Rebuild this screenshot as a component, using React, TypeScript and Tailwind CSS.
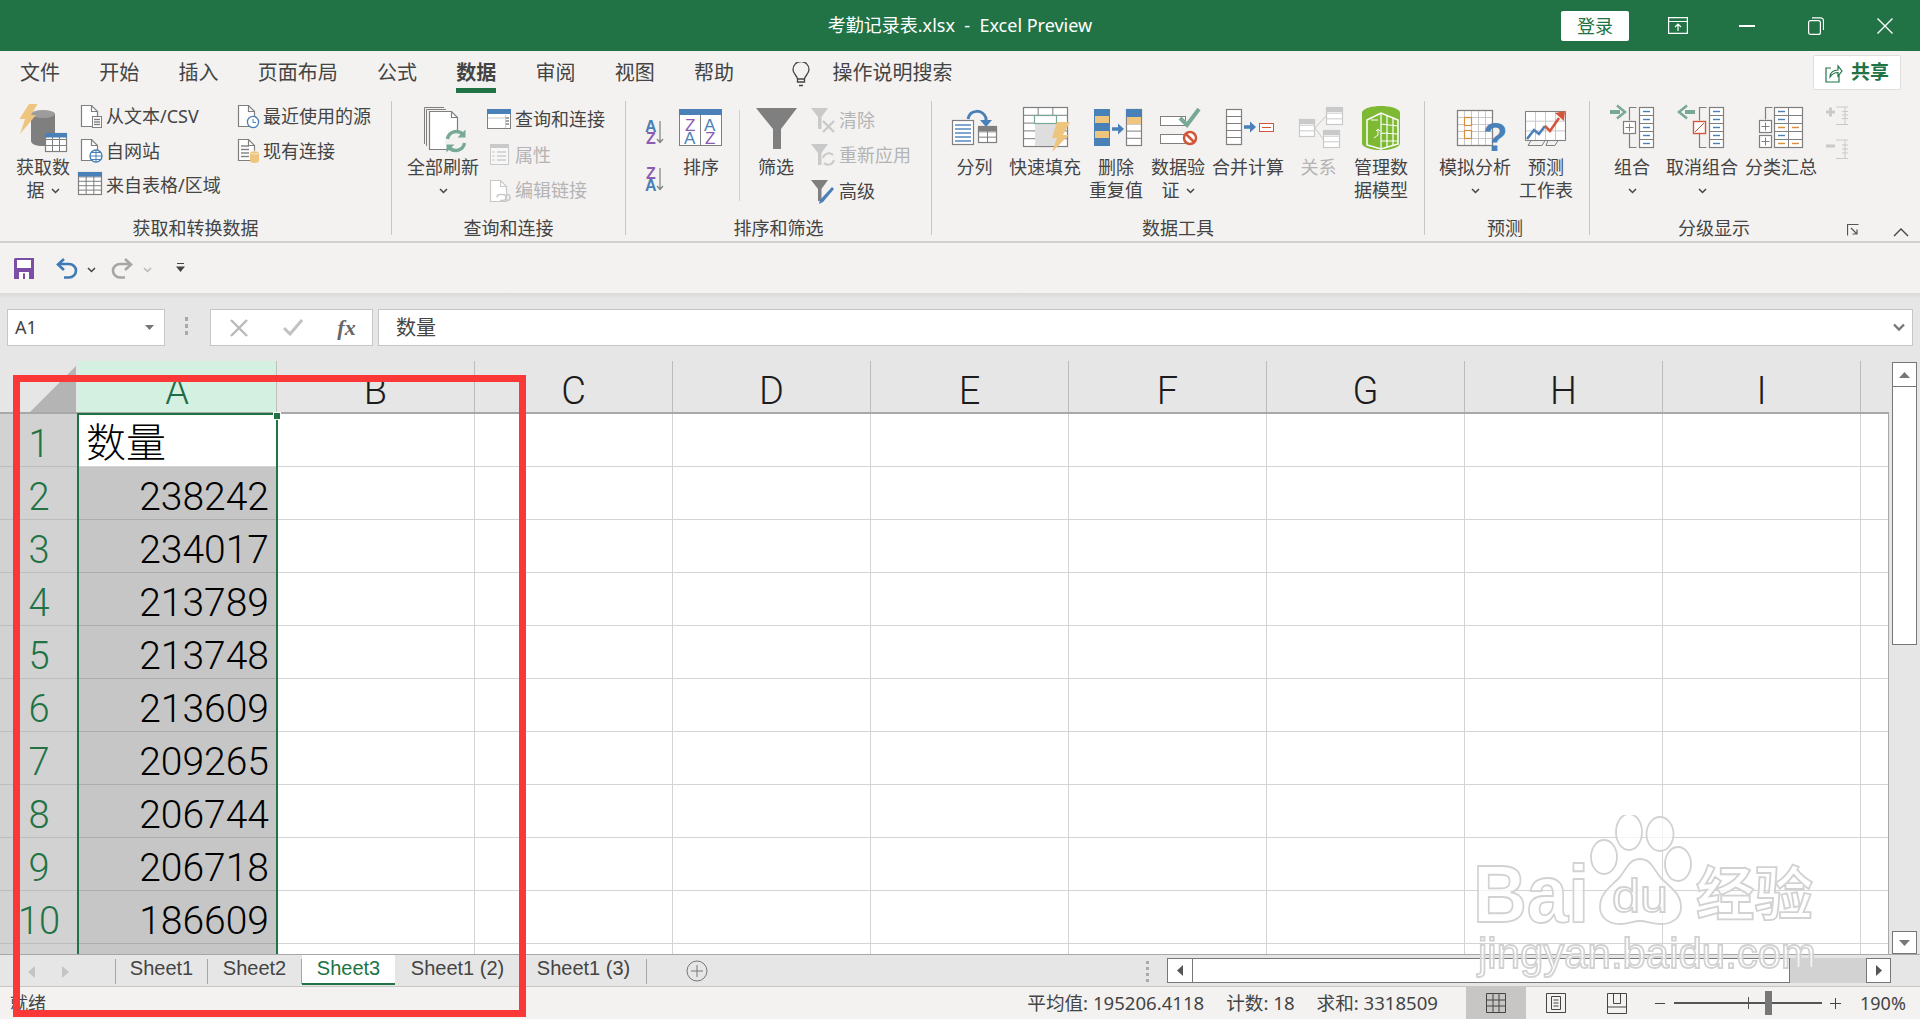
import type { ReactNode } from 'react'

const GRAY = '#7f7f7f'
const BLUE = '#4a80b8'
const ORANGE = '#edc57f'
const GREEN = '#77a995'
const RED = '#d2573a'
const PALE = '#c9c9c9'

const COLS = ['B', 'C', 'D', 'E', 'F', 'G', 'H', 'I']
const ROWS = ['238242', '234017', '213789', '213748', '213609', '209265', '206744', '206718', '186609']

// ---- icon helpers: everything is drawn in screen coordinates through the viewBox

function Tbl({ x, y, w, h, cols = 1, rows = 1, stroke = GRAY }: { x: number; y: number; w: number; h: number; cols?: number; rows?: number; stroke?: string }) {
  const v = Array.from({ length: cols - 1 }, (_, i) => x + ((i + 1) * w) / cols)
  const r = Array.from({ length: rows - 1 }, (_, i) => y + ((i + 1) * h) / rows)
  return (
    <g stroke={stroke} fill="none">
      <rect x={x} y={y} width={w} height={h} fill="#fff" strokeWidth="1.2" />
      {v.map((a) => <line key={a} x1={a} x2={a} y1={y} y2={y + h} strokeWidth="1" />)}
      {r.map((a) => <line key={a} x1={x} x2={x + w} y1={a} y2={a} strokeWidth="1" />)}
    </g>
  )
}

function Doc({ x, y, w, h, stroke = GRAY }: { x: number; y: number; w: number; h: number; stroke?: string }) {
  return (
    <g fill="#fff" stroke={stroke} strokeWidth="1.2">
      <path d={`M${x} ${y}H${x + w - 6}L${x + w} ${y + 6}V${y + h}H${x}Z`} />
      <path d={`M${x + w - 6} ${y}V${y + 6}H${x + w}`} fill="none" />
    </g>
  )
}

function Funnel({ x, y, color = GRAY }: { x: number; y: number; color?: string }) {
  return <polygon points={`${x},${y} ${x + 17},${y} ${x + 10.5},${y + 9} ${x + 10.5},${y + 21} ${x + 7},${y + 21} ${x + 7},${y + 9}`} fill={color} />
}

function Dashes({ x, ys, color = BLUE, w = 7 }: { x: number; ys: number[]; color?: string; w?: number }) {
  return <g stroke={color} strokeWidth="1.4">{ys.map((y) => <line key={y} x1={x} x2={x + w} y1={y} y2={y} />)}</g>
}

function Chev({ color = '#444' }: { color?: string }) {
  return (
    <svg width="9" height="6" viewBox="0 0 9 6" className="inline-block shrink-0">
      <path d="M1 1l3.5 3.5L8 1" fill="none" stroke={color} strokeWidth="1.5" />
    </svg>
  )
}

function Large({ x, w, lines, chev, off, children }: { x: number; w: number; lines: string[]; chev?: 'inline' | 'below'; off?: boolean; children: ReactNode }) {
  const tone = off ? 'text-[#b4b4b4]' : 'text-[#444]'
  return (
    <div className={`flex flex-col items-center mt-[9px] text-[18px] leading-[23px] whitespace-nowrap ${tone}`}>
      <svg width={w} height={51} viewBox={`${x} 104 ${w} 51`} fill="none" className="block overflow-visible mb-px">{children}</svg>
      {lines.map((l, i) => (
        <div key={l} className="flex items-center gap-[6px] h-[23px]">
          {l}
          {chev === 'inline' && i === lines.length - 1 && <Chev />}
        </div>
      ))}
      {chev === 'below' && <div className="flex items-center h-[23px]"><Chev /></div>}
    </div>
  )
}

function Small({ x, y, w = 28, h, text, off, children }: { x: number; y: number; w?: number; h: number; text?: string; off?: boolean; children: ReactNode }) {
  return (
    <div className={`flex items-center text-[18px] whitespace-nowrap ${off ? 'text-[#b4b4b4]' : 'text-[#444]'}`}>
      <svg width={w} height={h} viewBox={`${x} ${y} ${w} ${h}`} fill="none" className="block overflow-visible shrink-0">{children}</svg>
      {text}
    </div>
  )
}

function Sep() {
  return <div className="w-px h-[134px] mt-[6px] bg-[#c8c6c4] shrink-0" />
}

function Group({ label, className, labelClass = '', children }: { label: string; className: string; labelClass?: string; children: ReactNode }) {
  return (
    <div className={`flex flex-col h-[146px] shrink-0 ${className}`}>
      <div className="flex h-[121px]">{children}</div>
      <div className={`relative text-center text-[18px] leading-[24px] text-[#444] ${labelClass}`}>{label}</div>
    </div>
  )
}

function Watermark() {
  const edge = { stroke: '#d2d2d2', strokeWidth: 1.8, fill: 'rgba(255,255,255,0.72)' }
  return (
    <svg width="360" height="170" viewBox="1465 815 360 170" className="absolute left-[1465px] top-[815px] blur-[0.4px] pointer-events-none">
      <text x="1473" y="922" fontFamily="Liberation Sans" fontWeight="700" fontSize="82" textLength="116" lengthAdjust="spacingAndGlyphs" {...edge}>Bai</text>
      <ellipse cx="1629" cy="832" rx="13" ry="18" {...edge} />
      <ellipse cx="1660" cy="834" rx="13.5" ry="17" {...edge} />
      <ellipse cx="1604" cy="857" rx="13" ry="17" {...edge} />
      <ellipse cx="1678" cy="864" rx="13" ry="17" {...edge} />
      <path d="M1640 859c-12 0-14 12-22 20-9 9-18 15-18 28 0 11 9 17 20 17 9 0 13-3 20-3s12 3 21 3c11 0 20-6 20-17 0-13-10-19-19-28-8-8-10-20-22-20z" {...edge} />
      <text x="1612" y="912" fontFamily="Liberation Sans" fontSize="46" textLength="56" lengthAdjust="spacingAndGlyphs" {...edge}>du</text>
      <text x="1696" y="915" fontFamily="Noto Sans CJK SC" fontWeight="700" fontSize="58" textLength="117" lengthAdjust="spacingAndGlyphs" {...edge}>经验</text>
      <text x="1478" y="968" fontFamily="Liberation Sans" fontSize="42" textLength="338" lengthAdjust="spacingAndGlyphs" {...edge}>jingyan.baidu.com</text>
    </svg>
  )
}

function Ribbon() {
  return (
    <div className="relative flex h-[148px] border-b-2 border-[#d2d0ce] bg-[#f3f2f1]">
      <Group label="获取和转换数据" className="w-[391px]">
        <div className="pl-[12px]">
          <Large x={12} w={62} lines={['获取数', '据']} chev="inline">
            <path d="M31 114v27c0 3 5 5 12 5s12-2 12-5v-27z" fill={GRAY} />
            <ellipse cx="43" cy="114" rx="12" ry="4" fill="#9c9c9c" />
            <Tbl x={45.5} y={133.5} w={21} h={18} cols={3} rows={3} />
            <rect x="45" y="133" width="22" height="4.5" fill={BLUE} />
            <polygon points="29,104 37.5,104 31,115 36,115 20,134 25,119 19.5,119" fill={ORANGE} />
          </Large>
        </div>
        <div className="flex flex-col w-[160px] ml-[4px] pt-[4px]">
          <Small x={78} y={99} h={35} text="从文本/CSV">
            <Doc x={81.5} y={105.5} w={16} h={21} />
            <rect x="92.5" y="116.5" width="9" height="11" fill="#fff" stroke={GRAY} />
            <Dashes x={94} ys={[119.5, 122, 124.5]} color={GRAY} w={6} />
          </Small>
          <Small x={78} y={134} h={34} text="自网站">
            <Doc x={81.5} y={139.5} w={16} h={21} />
            <circle cx="96" cy="156" r="6" fill="#fff" stroke={BLUE} strokeWidth="1.4" />
            <path d="M90 156h12M96 150v12M92 152.5h8M92 159.5h8" stroke={BLUE} />
          </Small>
          <Small x={78} y={168} h={35} text="来自表格/区域">
            <Tbl x={78.5} y={172.5} w={23} h={22} cols={3} rows={5} />
            <rect x="78" y="172" width="24" height="4.5" fill={BLUE} />
          </Small>
        </div>
        <div className="flex flex-col pt-[4px]">
          <Small x={238} y={99} w={25} h={35} text="最近使用的源">
            <Doc x={238.5} y={105.5} w={16} h={21} />
            <circle cx="253" cy="122" r="5.6" fill="#fff" stroke={BLUE} strokeWidth="1.3" />
            <path d="M253 119v3.5h3" stroke={BLUE} />
          </Small>
          <Small x={238} y={134} w={25} h={34} text="现有连接">
            <Doc x={238.5} y={139.5} w={16} h={21} />
            <Dashes x={241} ys={[146, 149.5, 153, 156.5]} color={GRAY} w={8} />
            <path d="M250 153v8c0 1 2 2 4.5 2s4.5-1 4.5-2v-8z" fill={ORANGE} />
            <ellipse cx="254.5" cy="152.5" rx="4.5" ry="1.6" fill={ORANGE} stroke="#fff" strokeWidth=".6" />
          </Small>
        </div>
      </Group>
      <Sep />
      <Group label="查询和连接" className="w-[233px]">
        <div className="pl-[7px]">
          <Large x={399} w={88} lines={['全部刷新']} chev="below">
            <path d="M424.5 144V107.5H444M426.5 146V109.5H446" stroke={GRAY} />
            <Doc x={429.5} y={111.5} w={28} h={38} />
            <circle cx="456" cy="141" r="11" fill="#f3f2f1" />
            <path d="M447.5 139a9 9 0 0 1 15.5-4.5M464.5 143a9 9 0 0 1-15.5 4.5" stroke={GREEN} strokeWidth="3.4" />
            <path d="M465.5 129.5v8h-8zM446.5 152.5v-8h8z" fill={GREEN} />
          </Large>
        </div>
        <div className="flex flex-col pt-[6px]">
          <Small x={487} y={101} h={36} text="查询和连接">
            <rect x="487.5" y="109.5" width="23" height="19" fill="#fff" stroke={GRAY} />
            <rect x="487" y="109" width="24" height="5" fill={BLUE} />
            <path d="M505.5 115v13M488 118h17" stroke={PALE} />
            <Dashes x={506} ys={[118, 121, 124]} color={GRAY} w={3} />
          </Small>
          <Small x={487} y={137} h={36} text="属性" off>
            <rect x="490.5" y="144.5" width="18" height="20" fill="#f7f7f7" stroke={PALE} />
            <rect x="490" y="144" width="19" height="4" fill={PALE} />
            <Dashes x={497} ys={[152, 156, 160]} color={PALE} w={9} />
            <Dashes x={492.5} ys={[152, 156, 160]} color={PALE} w={2} />
          </Small>
          <Small x={487} y={173} h={35} text="编辑链接" off>
            <Doc x={490.5} y={180.5} w={16} h={21} stroke={PALE} />
            <path d="M497 197.5a3 3 0 0 1 3-3h3a3 3 0 0 1 0 6h-3M510 197.5a3 3 0 0 0-3-3M507 200.5a3 3 0 0 0 0-6" stroke={PALE} strokeWidth="1.5" />
          </Small>
        </div>
      </Group>
      <Sep />
      <Group label="排序和筛选" className="w-[305px]">
        <div className="pl-[10px] pt-[5px]">
          <svg width="36" height="100" viewBox="636 100 36 100" className="block">
            <g fontFamily="Liberation Sans" fontWeight="700" fontSize="16">
              <text x="645" y="131.5" fill={BLUE}>A</text>
              <text x="646" y="143.5" fill="#8a5db3">Z</text>
              <text x="646" y="179" fill="#8a5db3">Z</text>
              <text x="645" y="190.5" fill={BLUE}>A</text>
            </g>
            <path d="M660 121v21M657 139l3 3.5 3-3.5M660 168v21M657 186l3 3.5 3-3.5" fill="none" stroke={GRAY} strokeWidth="1.2" />
          </svg>
        </div>
        <Large x={672} w={58} lines={['排序']}>
          <rect x="679.5" y="109.5" width="42" height="36" fill="#fff" stroke={GRAY} />
          <rect x="679" y="109" width="43" height="6" fill={BLUE} />
          <line x1="700.5" x2="700.5" y1="115" y2="146" stroke={GRAY} />
          <g fontFamily="Liberation Sans" fontSize="17">
            <text x="685" y="131" fill="#8a5db3">Z</text>
            <text x="704" y="131" fill={BLUE}>A</text>
            <text x="684" y="144" fill={BLUE}>A</text>
            <text x="705" y="144" fill="#8a5db3">Z</text>
          </g>
        </Large>
        <div className="w-px h-[91px] mt-[15px] ml-[9px] bg-[#d2d0ce]" />
        <div className="ml-[8px]">
          <Large x={748} w={56} lines={['筛选']}>
            <polygon points="756,108 797,108 781,129 781,149 773,149 773,129" fill={GRAY} />
          </Large>
        </div>
        <div className="flex flex-col pt-[7px] ml-[4px]">
          <Small x={808} y={102} w={31} h={36} text="清除" off>
            <Funnel x={811} y={108} color={PALE} />
            <path d="M823 121l11 11M834 121l-11 11" stroke={PALE} strokeWidth="2.2" />
          </Small>
          <Small x={808} y={138} w={31} h={35} text="重新应用" off>
            <Funnel x={811} y={144} color={PALE} />
            <path d="M823 158a6 6 0 0 1 10-3M834 160a6 6 0 0 1-10 3" stroke={PALE} strokeWidth="2" />
          </Small>
          <Small x={808} y={173} w={31} h={36} text="高级">
            <Funnel x={811} y={180} />
            <path d="M834 189l-11 13-4 2 1-4 12-13z" fill={BLUE} />
          </Small>
        </div>
      </Group>
      <Sep />
      <Group label="数据工具" className="w-[492px]">
        <div className="flex pl-[8px]">
          <Large x={940} w={69} lines={['分列']}>
            <rect x="952.5" y="120.5" width="21" height="24" fill="#fff" stroke={GRAY} strokeWidth="1.2" />
            <Dashes x={955} ys={[125, 129, 133, 137, 141]} w={16} />
            <Tbl x={978.5} y={126.5} w={18} h={16} cols={2} rows={3} />
            <rect x="978" y="126" width="19" height="5" fill={GRAY} />
            <path d="M968 119c2-10 15-10 18-1v6" stroke={BLUE} strokeWidth="3" />
            <path d="M980 120l6 7 6-7z" fill={BLUE} />
          </Large>
          <Large x={1009} w={70} lines={['快速填充']}>
            <Tbl x={1022.5} y={107.5} w={44} h={39} cols={3} rows={5} />
            <rect x="1034" y="123" width="22" height="23" fill="#dedede" />
            <rect x="1033.5" y="115.5" width="22" height="8" fill="#fff" stroke={GREEN} strokeWidth="1.2" />
            <polygon points="1056,122 1069,122 1062,135 1068,135 1051,152 1056,138 1051,138" fill={ORANGE} />
          </Large>
          <Large x={1079} w={70} lines={['删除', '重复值']}>
            <rect x="1092" y="109" width="16" height="37" fill={BLUE} />
            <rect x="1093" y="116" width="14" height="7" fill={ORANGE} />
            <rect x="1093" y="131" width="14" height="7" fill={ORANGE} />
            <path d="M1110 129h8" stroke={BLUE} strokeWidth="3.5" />
            <path d="M1116 123.5l6 5.5-6 5.5z" fill={BLUE} />
            <Tbl x={1124.5} y={109.5} w={15} h={36} rows={5} />
            <rect x="1124" y="109" width="16" height="8" fill={BLUE} />
            <rect x="1125" y="117" width="14" height="7" fill={ORANGE} />
          </Large>
          <Large x={1149} w={54} lines={['数据验', '证']} chev="inline">
            <rect x="1158.5" y="116.5" width="25" height="9" fill="#fff" stroke={GRAY} />
            <rect x="1158.5" y="134.5" width="25" height="9" fill="#fff" stroke={GRAY} />
            <path d="M1178 118l7 7 12-16" stroke={GREEN} strokeWidth="4" />
            <circle cx="1188" cy="138" r="6" fill="#fff" stroke={RED} strokeWidth="2.5" />
            <path d="M1184 134l8 8" stroke={RED} strokeWidth="2.5" />
          </Large>
          <Large x={1203} w={86} lines={['合并计算']}>
            <Tbl x={1224.5} y={109.5} w={15} h={35} rows={5} />
            <path d="M1242 127h8" stroke={BLUE} strokeWidth="3.5" />
            <path d="M1248 121.5l6 5.5-6 5.5z" fill={BLUE} />
            <rect x="1257.5" y="123.5" width="14" height="8" fill="#fff" stroke={RED} />
            <path d="M1260 127.5h9" stroke={RED} />
          </Large>
          <Large x={1289} w={55} lines={['关系']} off>
            <path d="M1313 128l11-12M1313 128l8 11" stroke={PALE} />
            <Tbl x={1297.5} y={119.5} w={15} h={17} rows={3} stroke={PALE} />
            <rect x="1297" y="119" width="16" height="5" fill={PALE} />
            <Tbl x={1324.5} y={107.5} w={16} h={17} rows={3} stroke={PALE} />
            <rect x="1324" y="107" width="17" height="5" fill={PALE} />
            <Tbl x={1321.5} y={130.5} w={16} h={17} rows={3} stroke={PALE} />
            <rect x="1321" y="130" width="17" height="5" fill={PALE} />
          </Large>
          <Large x={1344} w={70} lines={['管理数', '据模型']}>
            <path d="M1360 112c4-8 34-8 38 0v32c-4 8-34 8-38 0z" fill="#7db933" />
            <path d="M1365 120l14-7 17 7v24l-17 5-14-4z" fill="#7db933" stroke="#fff" strokeWidth="1.5" />
            <path d="M1379 113v36M1385 116v31M1391 118v28M1379 124l17 2M1379 133l17 1M1379 141l17 0M1369 120l7 0" stroke="#fff" strokeWidth="1.2" />
            <path d="M1372 138l4-3v-6M1374 131l2-2 2 2" stroke="#fff" />
          </Large>
        </div>
      </Group>
      <Sep />
      <Group label="预测" className="w-[164px]" labelClass="pr-[4px]">
        <div className="flex pl-[7px]">
          <Large x={1432} w={86} lines={['模拟分析']} chev="below">
            <Tbl x={1457.5} y={110.5} w={35} h={35} cols={5} rows={5} stroke={PALE} />
            <rect x="1457.5" y="110.5" width="35" height="35" stroke={GRAY} strokeWidth="1.2" />
            <rect x="1464.5" y="117.5" width="7" height="8" fill="#fff" stroke="#e08a3c" strokeWidth="1.2" />
            <rect x="1464.5" y="130.5" width="7" height="8" fill="#fff" stroke="#e08a3c" strokeWidth="1.2" />
            <text x="1483" y="151" fontFamily="Liberation Sans" fontWeight="700" fontSize="40" fill={BLUE}>?</text>
          </Large>
          <Large x={1518} w={56} lines={['预测', '工作表']}>
            <Tbl x={1525.5} y={111.5} w={40} h={29} cols={4} rows={3} stroke={PALE} />
            <path d="M1525.5 111.5h40v29h-40zM1531 140.5l-3 5h14l3-5M1548 140.5l-2 5h9l3-5" stroke={GRAY} fill="none" />
            <path d="M1527 139l7-9 5 4 6-8" stroke={BLUE} strokeWidth="2.6" />
            <path d="M1545 126l5 5 9-13" stroke={RED} strokeWidth="2.6" />
            <path d="M1555 113l10-2-1 10z" fill={RED} />
          </Large>
        </div>
      </Group>
      <Sep />
      <Group label="分级显示" className="w-[274px]" labelClass="pr-[26px]">
        <div className="flex pl-[8px]">
          <Large x={1598} w={68} lines={['组合']} chev="below">
            <path d="M1610 112h10" stroke={GREEN} strokeWidth="4" />
            <path d="M1617 105.5l8 6.5-8 6.5" stroke={GREEN} strokeWidth="2.5" />
            <path d="M1636.5 107.5h-7v13M1636.5 147.5h-7v-14" stroke={GRAY} strokeWidth="1.2" />
            <rect x="1623.5" y="121.5" width="12" height="12" fill="#fff" stroke={GRAY} strokeWidth="1.2" />
            <path d="M1629.5 123.5v8M1625.5 127.5h8" stroke={GRAY} />
            <Tbl x={1639.5} y={107.5} w={14} h={40} rows={5} />
            <Dashes x={1643} ys={[111.5, 119.5, 127.5, 135.5, 143.5]} />
          </Large>
          <Large x={1666} w={72} lines={['取消组合']} chev="below">
            <path d="M1685 112h10" stroke={GREEN} strokeWidth="4" />
            <path d="M1687 105.5l-8 6.5 8 6.5" stroke={GREEN} strokeWidth="2.5" />
            <path d="M1706.5 107.5h-7v13M1706.5 147.5h-7v-14" stroke={GRAY} strokeWidth="1.2" />
            <rect x="1693.5" y="121.5" width="12" height="12" fill="#fff" stroke={RED} strokeWidth="1.4" />
            <path d="M1695 132l9-9" stroke={RED} />
            <Tbl x={1709.5} y={107.5} w={14} h={40} rows={5} />
            <Dashes x={1713} ys={[111.5, 119.5, 127.5, 135.5, 143.5]} />
          </Large>
          <Large x={1738} w={86} lines={['分类汇总']}>
            <path d="M1772.5 107.5h-7v12" stroke={GRAY} strokeWidth="1.2" />
            <rect x="1759.5" y="120.5" width="12" height="12" fill="#fff" stroke={GRAY} strokeWidth="1.2" />
            <rect x="1759.5" y="135.5" width="12" height="12" fill="#fff" stroke={GRAY} strokeWidth="1.2" />
            <path d="M1765.5 122.5v8M1761.5 126.5h8M1765.5 137.5v8M1761.5 141.5h8" stroke={GRAY} />
            <Tbl x={1774.5} y={107.5} w={28} h={40} cols={2} rows={5} />
            <Dashes x={1778} ys={[111.5, 119.5, 135.5]} />
            <Dashes x={1778} ys={[127.5, 143.5]} color="#e08a3c" />
            <Dashes x={1792} ys={[127.5, 143.5]} color="#e08a3c" />
          </Large>
          <div className="mt-[5px]">
            <svg width="26" height="64" viewBox="1824 100 26 64" className="block">
              <path d="M1826 112h9M1830.5 107.5v9" stroke={PALE} strokeWidth="3" />
              <path d="M1836 107h12M1842 111.5h6M1842 115h6M1842 118.5h6M1836 124.5h12M1845 107v18" stroke={PALE} />
              <path d="M1826 146h9" stroke={PALE} strokeWidth="3" />
              <path d="M1836 140h12M1842 145h6M1842 149h6M1842 153h6M1836 158.5h12M1845 140v19" stroke={PALE} />
            </svg>
          </div>
        </div>
      </Group>
      {/* launcher + collapse sit on the ribbon's bottom edge */}
      <svg width="12" height="12" viewBox="0 0 12 12" className="absolute left-[1847px] top-[129px]">
        <path d="M.5 11.5V.5h11M4 4l6 6M10 5.5V10H5.5" fill="none" stroke="#555" strokeWidth="1.2" />
      </svg>
      <svg width="16" height="9" viewBox="0 0 16 9" className="absolute left-[1893px] top-[133px]">
        <path d="M1 8l7-7 7 7" fill="none" stroke="#444" strokeWidth="1.4" />
      </svg>
    </div>
  )
}

const TABS = ['文件', '开始', '插入', '页面布局', '公式', '数据', '审阅', '视图', '帮助']

function Sheet() {
  return (
    <div className="relative flex-1 overflow-hidden [font-family:'Roboto','Noto_Sans_CJK_SC',sans-serif] font-light">
      {/* column headings */}
      <div className="flex h-[53px] border-b-2 border-[#a8a8a8] text-[38px] text-[#1c1c1c]">
        <div className="relative w-[78px] shrink-0">
          <svg width="46" height="46" viewBox="0 0 46 46" className="absolute left-[30px] top-[5px]"><polygon points="46,0 46,46 0,46" fill="#b4b4b4" /></svg>
        </div>
        <div className="w-[199px] shrink-0 bg-[#d3f0e0] border-r border-[#c0c0c0] text-center leading-[60px] text-[#1f6b45]">A</div>
        {COLS.map((c) => <div key={c} className="w-[198px] shrink-0 border-r border-[#bcbcbc] text-center leading-[60px]">{c}</div>)}
      </div>
      {/* rows */}
      {[null, ...ROWS, ''].map((v, i) => (
        <div key={i} className="flex h-[53px] bg-white border-r border-[#a8a8a8]">
          <div className="w-[78px] shrink-0 bg-[#d2d2d2] border-b border-[#bdbdbd] text-center text-[38px] leading-[61px] text-[#217346]">{i < 10 ? i + 1 : ''}</div>
          {v === null ? (
            <div className="w-[199px] shrink-0 bg-white border-b border-[#d4d4d4] pl-[8px] text-[40px] leading-[60px] text-black">数量</div>
          ) : (
            <div className="w-[199px] shrink-0 bg-[#c6c6c6] border-b border-[#acacac] pr-[8px] text-right text-[39px] leading-[60px] text-black">{v}</div>
          )}
          {COLS.map((c) => <div key={c} className="w-[198px] shrink-0 border-r border-b border-[#d4d4d4]" />)}
          <div className="flex-1 border-b border-[#d4d4d4]" />
        </div>
      ))}
      {/* selection */}
      <div className="absolute left-[77px] top-[52px] w-[201px] h-[560px] border-2 border-[#217346] pointer-events-none" />
      <div className="absolute left-[274px] top-[52px] w-[6px] h-[6px] bg-[#217346] outline outline-1 outline-white" />
    </div>
  )
}

function SheetTab({ name, w, active }: { name: string; w: string; active?: boolean }) {
  if (active) {
    return <div className={`h-[30px] bg-white border-b-2 border-[#217346] text-[#217346] text-center leading-[26px] ${w}`}>{name}</div>
  }
  return (
    <div className={`flex h-[30px] items-start text-[#444] ${w}`}>
      <div className="flex-1 text-center leading-[26px]">{name}</div>
      <div className="w-px h-[25px] mt-[4px] bg-[#a6a6a6]" />
    </div>
  )
}

export default function App() {
  return (
    <div className="relative w-[1920px] h-[1019px] overflow-hidden bg-[#e6e6e6] [font-family:'Noto_Sans','Noto_Sans_CJK_SC',sans-serif] text-[#444]">
      {/* title bar */}
      <div className="grid grid-cols-[1fr_auto_1fr] items-center h-[51px] bg-[#217346] text-white">
        <div />
        <div className="text-[18px] whitespace-pre">考勤记录表.xlsx  -  Excel Preview</div>
        <div className="flex items-center justify-end pr-px">
          <div className="w-[68px] h-[30px] mr-[14px] rounded-[2px] bg-white text-center text-[18px] leading-[30px] text-[#217346]">登录</div>
          <div className="flex justify-center w-[69px]">
            <svg width="20" height="17" viewBox="0 0 20 17" fill="none" stroke="#fff" strokeWidth="1.2"><path d="M.6.6h18.8v15.8H.6zM.6 4.5h18.8M10 14V7.5M7 10l3-3 3 3" /></svg>
          </div>
          <div className="flex justify-center w-[69px]"><div className="w-[16px] h-[2px] bg-white" /></div>
          <div className="flex justify-center w-[69px]">
            <svg width="16" height="18" viewBox="0 0 16 18" fill="none" stroke="#fff" strokeWidth="1.2"><rect x=".6" y="3.6" width="11.8" height="13.8" rx="2" /><path d="M4 .8h8.5a3 3 0 0 1 3 3V13" /></svg>
          </div>
          <div className="flex justify-center w-[69px]">
            <svg width="16" height="16" viewBox="0 0 16 16" stroke="#fff" strokeWidth="1.4"><path d="M.5.5l15 15M15.5.5l-15 15" /></svg>
          </div>
        </div>
      </div>

      {/* tabs */}
      <div className="flex items-start h-[44px] pl-[20px] gap-[39.25px] bg-[#f3f2f1] text-[20px]">
        {TABS.map((t) => (
          <div key={t} className="flex flex-col mt-[8px] leading-[28px]">
            <span className={t === '数据' ? 'font-bold' : ''}>{t}</span>
            {t === '数据' && <div className="h-[5px] mt-[1px] bg-[#217346]" />}
          </div>
        ))}
        <svg width="18" height="25" viewBox="0 0 18 25" fill="none" stroke="#444" strokeWidth="1.3" className="mt-[11px] ml-[19px]">
          <path d="M5.5 17c0-3-4.5-5-4.5-9.5a8 8 0 0 1 16 0C17 12 12.5 14 12.5 17zM5.5 17v3h7v-3M7 23.5h4" />
        </svg>
        <span className="mt-[8px] -ml-[17px] leading-[28px]">操作说明搜索</span>
        <div className="flex items-center justify-center gap-[8px] w-[88px] h-[35px] ml-auto mr-[19px] mt-[4px] rounded-[2px] border border-[#e1dfdd] bg-white text-[19px] font-bold text-[#217346]">
          <svg width="18" height="20" viewBox="0 0 18 20" fill="none" stroke="#217346" strokeWidth="1.2"><path d="M6 5H1v14h13v-7M5 14c0-5 4-7 8-7V3l4 5-4 5V9.5c-4 0-6 1.5-8 4.5z" /></svg>
          共享
        </div>
      </div>

      <Ribbon />

      {/* quick access */}
      <div className="flex items-center h-[50px] bg-[#f3f2f1]">
        <svg width="20" height="21" viewBox="0 0 20 21" className="ml-[14px]">
          <path d="M0 1.5A1.5 1.5 0 0 1 1.5 0H20v21H0z" fill="#7c4da4" />
          <rect x="3" y="2" width="14" height="8" fill="#fff" />
          <rect x="5" y="14" width="10" height="7" fill="#fff" />
          <rect x="9" y="15.5" width="2" height="5.5" fill="#7c4da4" />
        </svg>
        <svg width="22" height="21" viewBox="0 0 22 21" fill="none" className="ml-[22px]">
          <path d="M3 6h10c4 0 7 3 7 6.5S17 19.5 13 19.5H8" stroke="#3f7ab6" strokeWidth="2.6" />
          <path d="M8 1L2 6.5 8 12" stroke="#3f7ab6" strokeWidth="2.6" />
        </svg>
        <div className="ml-[9px]"><Chev /></div>
        <svg width="22" height="21" viewBox="0 0 22 21" fill="none" className="ml-[15px]">
          <path d="M19 6H9c-4 0-7 3-7 6.5s3 7 7 7h5" stroke="#a6a6a6" strokeWidth="2.6" />
          <path d="M14 1l6 5.5L14 12" stroke="#a6a6a6" strokeWidth="2.6" />
        </svg>
        <div className="ml-[10px]"><Chev color="#b8b8b8" /></div>
        <svg width="9" height="10" viewBox="0 0 9 10" className="ml-[24px]"><path d="M1 .5h7" stroke="#444" /><path d="M0 3.5h9L4.5 9z" fill="#444" /></svg>
      </div>

      {/* formula bar */}
      <div className="h-[6px] bg-gradient-to-b from-[#d9d9d9] to-[#e6e6e6]" />
      <div className="flex items-start h-[62px] pl-[7px] pr-[7px] pt-[10px] text-[18px]">
        <div className="flex items-center justify-between w-[158px] h-[37px] pl-[7px] pr-[10px] border border-[#c6c6c6] bg-white">
          A1
          <svg width="9" height="6" viewBox="0 0 9 6"><path d="M0 0h9L4.5 5z" fill="#777" /></svg>
        </div>
        <div className="flex flex-col gap-[3px] mt-[8px] ml-[20px] mr-[22px]">
          <div className="w-[3px] h-[4px] bg-[#a9a9a9]" /><div className="w-[3px] h-[4px] bg-[#a9a9a9]" /><div className="w-[3px] h-[4px] bg-[#a9a9a9]" />
        </div>
        <div className="flex items-center w-[163px] h-[37px] border border-[#c6c6c6] bg-white">
          <div className="flex justify-center w-[56px]">
            <svg width="18" height="18" viewBox="0 0 18 18" stroke="#b9b9b9" strokeWidth="2.4"><path d="M1 1l16 16M17 1L1 17" /></svg>
          </div>
          <div className="flex justify-center w-[52px]">
            <svg width="20" height="17" viewBox="0 0 20 17" fill="none" stroke="#c2c2c2" strokeWidth="3"><path d="M1 9l6 6L19 1" /></svg>
          </div>
          <div className="flex-1 text-center pl-[2px] [font-family:'Liberation_Serif',serif] italic font-bold text-[22px] text-[#666]">fx</div>
        </div>
        <div className="flex items-center justify-between flex-1 h-[37px] ml-[5px] pl-[17px] pr-[7px] border border-[#c6c6c6] bg-white text-[20px]">
          数量
          <svg width="12" height="9" viewBox="0 0 12 9" fill="none" stroke="#777" strokeWidth="2.4"><path d="M1 1.5l5 5 5-5" /></svg>
        </div>
      </div>

      {/* grid + vertical scrollbar */}
      <div className="flex h-[593px]">
        <Sheet />
        <div className="flex flex-col w-[31px] pl-[3px] pr-[3px] pt-px">
          <div className="flex items-center justify-center h-[25px] border border-[#777] bg-white">
            <svg width="11" height="6" viewBox="0 0 11 6"><path d="M5.5 0L11 6H0z" fill="#777" /></svg>
          </div>
          <div className="h-[258px] border border-t-0 border-[#777] bg-white" />
          <div className="flex-1" />
          <div className="flex items-center justify-center h-[23px] border border-[#777] bg-white">
            <svg width="11" height="6" viewBox="0 0 11 6"><path d="M5.5 6L11 0H0z" fill="#777" /></svg>
          </div>
        </div>
      </div>

      {/* sheet tabs */}
      <div className="flex items-start h-[33px] border-t border-b border-t-[#a8a8a8] border-b-[#c6c6c6] text-[20px] [font-family:'Liberation_Sans',sans-serif]">
        <div className="flex items-center justify-start gap-[27px] w-[116px] h-[25px] mt-[4px] pl-[28px] border-r border-[#a6a6a6]">
          <svg width="7" height="12" viewBox="0 0 7 12"><path d="M7 0v12L0 6z" fill="#c4c4c4" /></svg>
          <svg width="7" height="12" viewBox="0 0 7 12"><path d="M0 0v12l7-6z" fill="#c4c4c4" /></svg>
        </div>
        <SheetTab name="Sheet1" w="w-[92px]" />
        <SheetTab name="Sheet2" w="w-[94px]" />
        <SheetTab name="Sheet3" w="w-[93px]" active />
        <SheetTab name="Sheet1 (2)" w="w-[126px]" />
        <SheetTab name="Sheet1 (3)" w="w-[126px]" />
        <svg width="22" height="22" viewBox="0 0 22 22" fill="none" stroke="#777" className="ml-[39px] mt-[5px]"><circle cx="11" cy="11" r="10" /><path d="M11 5v12M5 11h12" /></svg>
        <div className="flex items-start ml-auto mr-[29px]">
          <div className="flex flex-col gap-[3px] mt-[6px] mr-[18px]">
            <div className="w-[3px] h-[3px] bg-[#a9a9a9]" /><div className="w-[3px] h-[3px] bg-[#a9a9a9]" /><div className="w-[3px] h-[3px] bg-[#a9a9a9]" /><div className="w-[3px] h-[3px] bg-[#a9a9a9]" />
          </div>
          <div className="flex w-[724px] h-[25px] mt-[3px] bg-[#d2d2d2]">
            <div className="flex items-center justify-center w-[26px] border border-[#777] bg-white">
              <svg width="6" height="11" viewBox="0 0 6 11"><path d="M6 0v11L0 5.5z" fill="#555" /></svg>
            </div>
            <div className="w-[597px] border-y border-r border-[#777] bg-white" />
            <div className="flex-1" />
            <div className="flex items-center justify-center w-[25px] border border-[#777] bg-white">
              <svg width="6" height="11" viewBox="0 0 6 11"><path d="M0 0v11l6-5.5z" fill="#555" /></svg>
            </div>
          </div>
        </div>
      </div>

      {/* status bar */}
      <div className="flex items-center h-[32px] bg-[#f3f2f1] text-[18px]">
        <span className="pl-[10px]">就绪</span>
        <div className="flex gap-[22px] ml-auto mr-[28px] text-[18.6px]">
          <span>平均值: 195206.4118</span>
          <span>计数: 18</span>
          <span>求和: 3318509</span>
        </div>
        <div className="flex items-center justify-center w-[60px] h-full bg-[#c8c6c4]">
          <svg width="20" height="20" viewBox="0 0 20 20" fill="none" stroke="#444"><path d="M.5.5h19v19H.5zM.5 7h19M.5 13h19M7 .5v19M13 .5v19" /></svg>
        </div>
        <div className="flex items-center justify-center w-[60px] h-full">
          <svg width="20" height="20" viewBox="0 0 20 20" fill="none" stroke="#444"><path d="M.5.5h19v19H.5zM5.5 3.5h9v13h-9zM7.5 7h5M7.5 10h5M7.5 13h5" /></svg>
        </div>
        <div className="flex items-center justify-center w-[61px] h-full">
          <svg width="20" height="21" viewBox="0 0 20 21" fill="none" stroke="#444"><path d="M.5.5h19v20H.5zM6.5.5v10h7V.5M.5 14h19" /></svg>
        </div>
        <div className="flex items-center">
          <div className="w-[10px] h-px bg-[#444] ml-[8px]" />
          <div className="relative w-[148px] h-[2px] ml-[9px] bg-[#555]">
            <div className="absolute left-[74px] -top-[5px] w-px h-[12px] bg-[#555]" />
            <div className="absolute left-[91px] -top-[11px] w-[7px] h-[24px] bg-[#777]" />
          </div>
          <svg width="11" height="11" viewBox="0 0 11 11" stroke="#444" className="ml-[8px]"><path d="M5.5 0v11M0 5.5h11" /></svg>
        </div>
        <span className="ml-[19px] mr-[10px] w-[50px]">190%</span>
      </div>

      <Watermark />
      {/* red annotation frame drawn on the screenshot */}
      <div className="absolute left-[13px] top-[375px] w-[513px] h-[642px] border-[7px] border-[#fb3838] pointer-events-none" />
    </div>
  )
}
